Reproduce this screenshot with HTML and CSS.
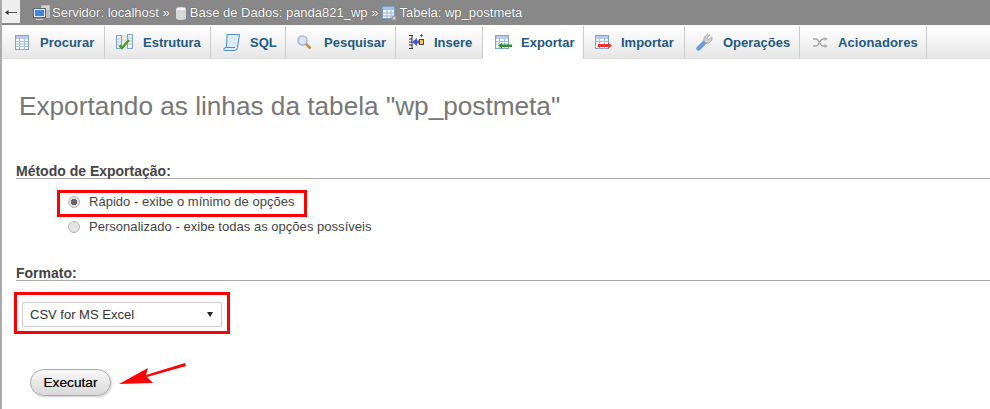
FILE: index.html
```html
<!DOCTYPE html>
<html lang="pt">
<head>
<meta charset="utf-8">
<title>Exportar</title>
<link rel="stylesheet" href="styles.css">
</head>
<body>
<div class="topbar">
  <div class="back"><svg width="12" height="7" viewBox="0 0 12 7"><path d="M1 3.500h11" stroke="#555"/><path d="M0 3.500L3.500 1v5z" fill="#333"/></svg></div>
  <div class="crumbs">
    <span class="crumb">
      <svg width="17" height="16" viewBox="0 0 17 16"><rect x="8" y="0" width="9" height="13" fill="#b8bcc0"/><path d="M9 2h7M9 4h7" stroke="#eee"/><rect x=".5" y="3.500" width="12" height="9" fill="#e4eaf0" stroke="#5e6a78"/><rect x="2" y="5" width="9" height="6" fill="#3f86d8"/><rect x="5" y="13" width="3" height="1" fill="#888"/><rect x="3" y="14" width="7" height="1" fill="#ccc"/></svg>
      Servidor: localhost »
    </span>
    <span class="crumb">
      <svg width="14" height="14" viewBox="0 0 14 14"><path d="M2 3v9c0 1 2 2 5 2s5-1 5-2V3z" fill="#d8d8d8"/><ellipse cx="7" cy="3" rx="5" ry="2" fill="#f4f4f4" stroke="#b0b0b0" stroke-width=".5"/></svg>
      Base de Dados: panda821_wp »
    </span>
    <span class="crumb">
      <svg width="15" height="16" viewBox="0 0 15 16"><rect x=".5" y="1.500" width="12" height="12" fill="#eef3fa" stroke="#7b9cc4"/><rect x="1" y="2" width="11" height="3" fill="#a9c1e0"/><path d="M1 8h11M1 11h11M5 5v8M9 5v8" stroke="#9db4d0"/><circle cx="12" cy="13" r="2.500" fill="#a0a0a0"/><circle cx="12" cy="13" r="1" fill="#e0e0e0"/></svg>
      Tabela: wp_postmeta
    </span>
  </div>
</div>

<nav class="tabs">
  <a class="tab tab-procurar">
    <svg width="14" height="15" viewBox="0 0 14 15"><rect x=".5" y=".5" width="13" height="14" fill="#f4f7fb" stroke="#7ea3d0"/><rect x="1" y="1" width="12" height="3" fill="#b6cbe6"/><path d="M1 6.500h12M1 9h12M1 11.500h12M4.500 4v10M9.500 4v10" stroke="#a8c0dc"/></svg>
    <span>Procurar</span>
  </a>
  <a class="tab tab-estrutura">
    <svg width="17" height="16" viewBox="0 0 17 16"><rect x=".5" y="1.500" width="5" height="13" fill="#eef3f9" stroke="#7ea3d0"/><rect x="11.500" y=".5" width="5" height="14" fill="#eef3f9" stroke="#7ea3d0"/><path d="M1 5h4M1 8h4M1 11h4M12 4h4M12 7h4M12 10h4" stroke="#b3c6de"/><path d="M6 1h5v14H6z" fill="#e6e6e6"/><path d="M3.500 11.500l2.500 2.500 7-8" fill="none" stroke="#4a9e2e" stroke-width="2.500"/></svg>
    <span>Estrutura</span>
  </a>
  <a class="tab tab-sql">
    <svg width="17" height="17" viewBox="0 0 17 17"><path d="M4 .5h12.500L14.500 13.500q-.5 3-2.500 3H1q2 0 2.500-3z" fill="#dcebfa" stroke="#4f8cd0"/><path d="M1 16.500q-1-3 2-3h9" fill="#dcebfa" stroke="#4f8cd0"/></svg>
    <span>SQL</span>
  </a>
  <a class="tab tab-pesquisar">
    <svg width="15" height="15" viewBox="0 0 15 15"><circle cx="5.500" cy="5.500" r="4.500" fill="#d4e6f6" stroke="#a8b8c8" stroke-width="1.500"/><path d="M9 9l4.500 4.500" stroke="#c9883a" stroke-width="2.500"/></svg>
    <span>Pesquisar</span>
  </a>
  <a class="tab tab-insere">
    <svg width="16" height="16" viewBox="0 0 16 16"><path d="M0 1.500h4M3 1.500v13M0 14.500h4M0 5h3M0 8h3M0 11h3" stroke="#333" fill="none"/><path d="M3 8l5-4v2.500h3v3H8V12z" fill="#4a55d0"/><rect x="10.500" y="5.500" width="4" height="5" fill="#f5cc3a" stroke="#444"/><path d="M11 1.500h3M12.500 0v3" stroke="#4a55d0"/></svg>
    <span>Insere</span>
  </a>
  <a class="tab tab-exportar active">
    <svg width="17" height="15" viewBox="0 0 17 15"><rect x=".5" y=".5" width="13" height="13" fill="#f4f7fb" stroke="#7ea3d0"/><rect x="1" y="1" width="12" height="3" fill="#b6cbe6"/><path d="M1 6.500h12M1 9h12M4.500 4v10M9.500 4v10" stroke="#a8c0dc"/><path d="M3 10.500L7 8v1.500h10v2.500H7v1.500z" fill="#2f8f2f"/></svg>
    <span>Exportar</span>
  </a>
  <a class="tab tab-importar">
    <svg width="17" height="15" viewBox="0 0 17 15"><rect x=".5" y=".5" width="13" height="13" fill="#f4f7fb" stroke="#7ea3d0"/><rect x="1" y="1" width="12" height="3" fill="#b6cbe6"/><path d="M1 6.500h12M4.500 4v10M9.500 4v10" stroke="#a8c0dc"/><path d="M3 9h10V7.500l4 3-4 3V12H3z" fill="#ee3030"/></svg>
    <span>Importar</span>
  </a>
  <a class="tab tab-operacoes">
    <svg width="17" height="17" viewBox="0 0 17 17"><path d="M2.500 14.500l7-7" stroke="#6a9de0" stroke-width="4.500" stroke-linecap="round"/><path d="M8 7.500V3.500L11 1h3l-3 2.500 1.500 2L16 3v3l-3 3H9.500z" fill="#d2d2d2" stroke="#999" stroke-width=".7"/></svg>
    <span>Operações</span>
  </a>
  <a class="tab tab-acionadores">
    <svg width="15" height="11" viewBox="0 0 15 11"><path d="M0 2h3c3 0 4 7 7 7h2M0 9h3c3 0 4-7 7-7h2" fill="none" stroke="#a8a8a8" stroke-width="1.500"/><path d="M11.500 0l3.500 2-3.500 2zM11.500 7l3.500 2-3.500 2z" fill="#b0b0b0"/></svg>
    <span>Acionadores</span>
  </a>
</nav>

<main class="page">
  <h2 class="title">Exportando as linhas da tabela "wp_postmeta"</h2>

  <section class="method">
    <h3 class="legend">Método de Exportação:</h3>
    <ul class="options">
      <li class="option"><span class="radio checked"></span><span>Rápido - exibe o mínimo de opções</span></li>
      <li class="option"><span class="radio"></span><span>Personalizado - exibe todas as opções possíveis</span></li>
    </ul>
    <div class="mark mark-method"></div>
  </section>

  <section class="format">
    <h3 class="legend">Formato:</h3>
    <div class="select"><span>CSV for MS Excel</span><span class="caret"></span></div>
    <div class="mark mark-format"></div>
  </section>

  <div class="submit">
    <button class="go" type="button">Executar</button>
    <svg class="arrow" width="68" height="24" viewBox="0 0 68 24"><path d="M0 22L29 6l-2 7L66 1l1 3-39 11 6 6z" fill="#f00"/></svg>
  </div>
</main>
</body>
</html>
```

FILE: styles.css
```css
* { box-sizing: border-box; }
html, body { margin: 0; height: 100%; }
body {
  width: 990px;
  height: 409px;
  overflow: hidden;
  background: #fff;
  border-left: 2px solid #aaa;
  font-family: "Liberation Sans", Arial, sans-serif;
  color: #444;
}
.topbar {
  height: 25px;
  background: #888;
  display: flex;
  align-items: stretch;
  color: #fff;
  font-size: 13px;
}
.back {
  width: 18px;
  height: 23px;
  background: #eee;
  display: flex;
  align-items: center;
  justify-content: center;
  padding-top: 1px;
}
.crumbs {
  display: flex;
  align-items: center;
  gap: 4px;
  padding-left: 13px;
  text-shadow: 0 0 1px #333;
}
.crumb { display: flex; align-items: center; gap: 2px; white-space: nowrap; }
.crumb svg { flex: none; }

.tabs {
  height: 33px;
  margin-top: 1px;
  display: flex;
  background: linear-gradient(#fff, #e6e6e6);
  border-bottom: 1px solid #ddd;
}
.tab {
  height: 32px;
  display: flex;
  align-items: center;
  border-right: 1px solid #ccc;
  color: #235a81;
  font-size: 13px;
  font-weight: bold;
  white-space: nowrap;
}
.tab svg { flex: none; }
.tab-procurar { width: 103px; padding-left: 13px; gap: 11px; }
.tab-estrutura { width: 106px; padding-left: 11px; gap: 10px; }
.tab-sql { width: 75px; padding-left: 12px; gap: 10px; }
.tab-pesquisar { width: 110px; padding-left: 11px; gap: 12px; }
.tab-insere { width: 87px; padding-left: 13px; gap: 9px; }
.tab-exportar { width: 101px; padding-left: 12px; gap: 9px; }
.tab-importar { width: 101px; padding-left: 11px; gap: 9px; }
.tab-operacoes { width: 115px; padding-left: 11px; gap: 10px; }
.tab-acionadores { width: 127px; padding-left: 13px; gap: 10px; }
.tab-acionadores span { letter-spacing: .1px; }
.active { background: #fff; height: 33px; }

.page { padding: 0 0 0 14px; }
.title {
  margin: 0;
  padding: 32px 0 0 3px;
  font-size: 26.2px;
  line-height: 30px;
  font-weight: normal;
  color: #777;
}
.method { position: relative; margin-top: 42px; }
.legend {
  margin: 0;
  height: 16px;
  font-size: 14px;
  line-height: 16px;
  font-weight: bold;
  color: #444;
  border-bottom: 1px solid #aaa;
}
.options { list-style: none; margin: 0; padding: 10px 0 0 52px; }
.option {
  height: 25px;
  display: flex;
  align-items: center;
  gap: 9px;
  font-size: 13px;
  letter-spacing: .03px;
  color: #444;
}
.radio {
  width: 12px;
  height: 12px;
  border-radius: 50%;
  background: #e4e4e4;
  border: 1px solid #b5b5b5;
  flex: none;
}
.radio.checked { background: radial-gradient(circle, #666 0 3px, #e4e4e4 3.500px); }
.mark { position: absolute; border: 3px solid #f00; }
.mark-method { left: 41px; top: 27px; width: 250px; height: 27px; }
.mark-format { left: -2px; top: 27px; width: 216px; height: 42px; }

.format { position: relative; margin-top: 26px; }
.select {
  width: 200px;
  height: 25px;
  margin: 21px 0 0 6px;
  padding: 0 8px 0 7px;
  display: flex;
  align-items: center;
  justify-content: space-between;
  border: 1px solid #ccc;
  border-radius: 2px;
  font-size: 13px;
  color: #333;
}
.caret {
  border-left: 3px solid transparent;
  border-right: 3px solid transparent;
  border-top: 5px solid #222;
}
.submit { position: relative; margin: 42px 0 0 14px; }
.go {
  display: block;
  width: 81px;
  height: 27px;
  padding: 0;
  border: 1px solid #aaa;
  border-radius: 14px;
  background: linear-gradient(#f8f8f8, #d8d8d8);
  font: 13.7px "Liberation Sans", Arial, sans-serif;
  text-shadow: 0 0 .6px #333;
  color: #111;
  box-shadow: 1px 1px 2px #ccc;
}
.arrow { position: absolute; left: 89px; top: -7px; }
```
